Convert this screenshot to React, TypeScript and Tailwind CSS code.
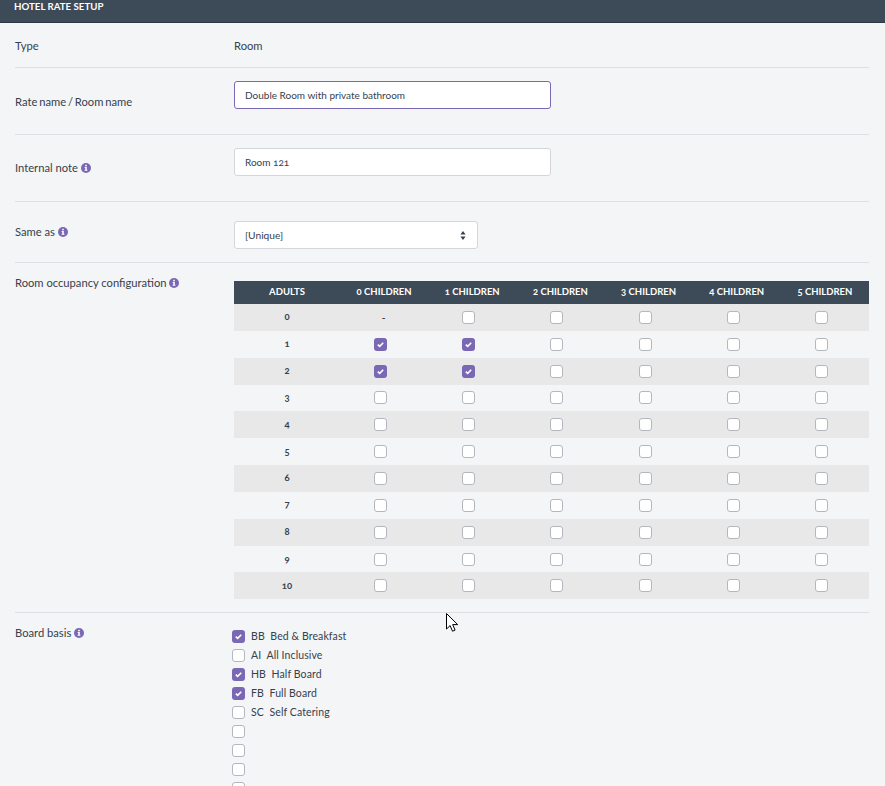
const font = "font-['Lato','Open_Sans',sans-serif]";

function InfoIcon() {
  return (
    <svg width="10" height="10" viewBox="0 0 10 10" className="inline-block shrink-0">
      <circle cx="5" cy="5" r="5" fill="#7b68b5" />
      <rect x="4.2" y="1.8" width="1.6" height="1.5" fill="#fff" />
      <path d="M3.7 4.1h2.1v2.6h.6v1h-2.8v-1h.7V5.1h-.6z" fill="#fff" />
    </svg>
  );
}

function Checkbox({ checked = false }: { checked?: boolean }) {
  if (checked) {
    return (
      <span className="flex h-[13px] w-[13px] items-center justify-center rounded-[3px] bg-[#7b68b5]">
        <svg width="9" height="9" viewBox="0 0 9 9">
          <path d="M1.8 4.6l1.9 1.8 3.5-3.6" fill="none" stroke="#fff" strokeWidth="1.6" />
        </svg>
      </span>
    );
  }
  return <span className="block h-[13px] w-[13px] rounded-[3px] border border-[#b3b8bf] bg-white" />;
}

function Label({ text, info = false }: { text: string; info?: boolean }) {
  return (
    <span className="flex items-center gap-[3px] text-[11.2px] leading-[14px] text-[#36414d]">
      {text}
      {info && <InfoIcon />}
    </span>
  );
}

const columns = ["0 CHILDREN", "1 CHILDREN", "2 CHILDREN", "3 CHILDREN", "4 CHILDREN", "5 CHILDREN"];
const adults = [0, 1, 2, 3, 4, 5, 6, 7, 8, 9, 10];

function OccupancyTable() {
  return (
    <div className="w-[635px]">
      <div className="grid h-[23px] grid-cols-[106px_repeat(6,1fr)] items-center bg-[#3d4a57] text-center text-[9.5px] font-bold text-white">
        <span>ADULTS</span>
        {columns.map((c) => (
          <span key={c} className="oldstyle-nums">{c}</span>
        ))}
      </div>
      {adults.map((a) => (
        <div
          key={a}
          className={`grid h-[26.85px] grid-cols-[106px_repeat(6,1fr)] items-center ${a % 2 === 0 ? "bg-[#e8e8e8]" : "bg-[#f4f5f7]"}`}
        >
          <span className="text-center text-[9.5px] font-bold text-[#36414d] oldstyle-nums">{a}</span>
          {columns.map((c, i) => (
            <span key={c} className="flex justify-center pr-[7px] text-[10px] text-[#36414d]">
              {a === 0 && i === 0 ? <span className="ml-[6px] font-bold">-</span> : <Checkbox checked={(a === 1 || a === 2) && i < 2} />}
            </span>
          ))}
        </div>
      ))}
    </div>
  );
}

const boards = [
  { label: "BB  Bed & Breakfast", checked: true },
  { label: "AI  All Inclusive", checked: false },
  { label: "HB  Half Board", checked: true },
  { label: "FB  Full Board", checked: true },
  { label: "SC  Self Catering", checked: false },
  { label: "", checked: false },
  { label: "", checked: false },
  { label: "", checked: false },
  { label: "", checked: false },
];

export default function App() {
  return (
    <div className={`relative h-[786px] w-[886px] overflow-hidden border-r border-[#d5d8de] bg-[#f4f5f7] ${font}`}>
      <div className="h-[23px] border-b border-[#2f3a45] bg-[#3d4a57] pl-[14px] text-[9.7px] font-bold leading-[12px] text-white">
        HOTEL RATE SETUP
      </div>

      <div className="mx-[15px] w-[854px]">
        <div className="flex h-[45px] items-center border-b border-[#dcdfe3] pt-[1px]">
          <div className="w-[219px]"><Label text="Type" /></div>
          <Label text="Room" />
        </div>

        <div className="flex h-[67px] border-b border-[#dcdfe3] pt-[13px]">
          <div className="w-[219px] pt-[14px] [word-spacing:-1px]"><Label text="Rate name / Room name" /></div>
          <div className="flex h-[28px] w-[317px] items-center rounded-[3px] border border-[#7b68b5] bg-white pl-[10px] pt-[1px] text-[10px] text-[#36414d]">
            Double Room with private bathroom
          </div>
        </div>

        <div className="flex h-[67px] border-b border-[#dcdfe3] pt-[13px]">
          <div className="w-[219px] pt-[13px]"><Label text="Internal note" info /></div>
          <div className="flex h-[28px] w-[317px] items-center rounded-[3px] border border-[#d3d6db] bg-white pl-[10px] pt-[1px] text-[10px] text-[#36414d] oldstyle-nums">
            Room 121
          </div>
        </div>

        <div className="flex h-[61px] border-b border-[#dcdfe3] pt-[19px]">
          <div className="w-[219px] pt-[4px]"><Label text="Same as" info /></div>
          <div className="flex h-[28px] w-[244px] items-center justify-between rounded-[3px] border border-[#d3d6db] bg-white pl-[10px] pr-[11px] pt-[1px] text-[10.2px] text-[#36414d]">
            [Unique]
            <svg width="6" height="9" viewBox="0 0 6 9">
              <path d="M3 0l2.6 3.4H.4zM3 9L.4 5.6h5.2z" fill="#36414d" />
            </svg>
          </div>
        </div>

        <div className="flex h-[350px] border-b border-[#dcdfe3] pt-[13px]">
          <div className="w-[219px]"><Label text="Room occupancy configuration" info /></div>
          <div className="pt-[5px]"><OccupancyTable /></div>
        </div>

        <div className="flex pt-[13px]">
          <div className="w-[217px]"><Label text="Board basis" info /></div>
          <div className="flex flex-col gap-[6px] pt-[4px]">
            {boards.map((b, i) => (
              <div key={i} className="flex h-[13px] items-center gap-[6px] whitespace-pre text-[10.5px] tracking-[0.1px] text-[#36414d]">
                <Checkbox checked={b.checked} />
                {b.label}
              </div>
            ))}
          </div>
        </div>
      </div>

      <svg width="13" height="20" viewBox="0 0 13 20" className="absolute left-[446px] top-[613px]">
        <path d="M.5.5v15.5l3.6-3.4 2.4 5.6 2.6-1.1-2.4-5.5h5z" fill="#fff" stroke="#000" strokeWidth="1" />
      </svg>
    </div>
  );
}
